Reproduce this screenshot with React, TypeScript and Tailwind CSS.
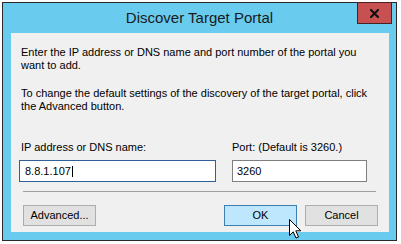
const font = "font-['Liberation_Sans',Arial,sans-serif]";

const Btn: React.FC<{ label: string; hot?: boolean }> = ({ label, hot }) => (
  <button
    className={
      hot
        ? 'w-[73px] h-[21px] border border-[#3c7fb1] bg-[#bee6fd] text-[11px] leading-[13px] text-black'
        : 'w-[73px] h-[21px] border border-[#adadad] bg-[#e1e1e1] text-[11px] leading-[13px] text-black'
    }
  >
    {label}
  </button>
);

const Cursor = () => (
  <svg
    className="absolute left-[288px] top-[218px]"
    width="14"
    height="22"
    viewBox="0 0 14 22"
  >
    <path
      d="M1.5 1.5 L1.5 17.5 L5.2 13.8 L8 20 L10.5 19 L7.8 12.8 L12.8 12.8 Z"
      fill="#fff"
      stroke="#000"
      strokeWidth="1"
      strokeLinejoin="miter"
    />
  </svg>
);

export default function App() {
  return (
    <div className={`relative w-[401px] h-[244px] bg-white pl-[2px] pt-[2px] overflow-hidden ${font}`}>
      <div className="w-[395px] h-[239px] border border-[#2b2b2b] bg-[#69cbee] flex flex-col">
        {/* title bar */}
        <div className="relative h-[30px] shrink-0 flex justify-center">
          <span className="pt-[6px] text-[15px] leading-[17px] text-[#1a1a1a]">Discover Target Portal</span>
          <button className="absolute right-[4px] top-[-1px] w-[35px] h-[22px] bg-[#c75050] border border-[#4a2020] flex items-center justify-center">
            <svg width="9" height="9" viewBox="0 0 9 9">
              <path d="M1 1 L8 8 M8 1 L1 8" stroke="#111" strokeWidth="2.2" strokeLinecap="square" />
            </svg>
          </button>
        </div>

        {/* client area */}
        <div className="ml-[8px] mr-[7px] mb-[8px] flex-1 bg-[#f0f0f0] flex flex-col text-[11px] leading-[13px] text-black">
          <p className="pt-[13px] pl-[10px] whitespace-nowrap">
            Enter the IP address or DNS name and port number of the portal you
            <br />
            want to add.
          </p>
          <p className="mt-[15px] pl-[10px] whitespace-nowrap">
            To change the default settings of the discovery of the target portal, click
            <br />
            the Advanced button.
          </p>

          <div className="mt-[28px] pl-[8px] flex gap-[16px]">
            <div className="flex flex-col w-[197px]">
              <label className="pl-[2px]">IP address or DNS name:</label>
              <div className="mt-[6px] h-[22px] border border-[#2f609a] bg-white flex items-center pl-[5px]">
                <span>8.8.1.107</span>
                <span className="w-px h-[11px] bg-black ml-[1px]" />
              </div>
            </div>
            <div className="flex flex-col w-[135px]">
              <label>Port: (Default is 3260.)</label>
              <div className="mt-[6px] h-[22px] border border-[#7f7f7f] bg-white flex items-center pl-[4px]">
                <span>3260</span>
              </div>
            </div>
          </div>

          <div className="mt-[9px] ml-[12px] w-[353px] h-px bg-[#a0a0a0]" />

          <div className="mt-[13px] ml-[12px] mr-[11px] flex">
            <Btn label="Advanced..." />
            <div className="flex-1" />
            <div className="flex gap-[8px]">
              <Btn label="OK" hot />
              <Btn label="Cancel" />
            </div>
          </div>
        </div>
      </div>
      <Cursor />
    </div>
  );
}
